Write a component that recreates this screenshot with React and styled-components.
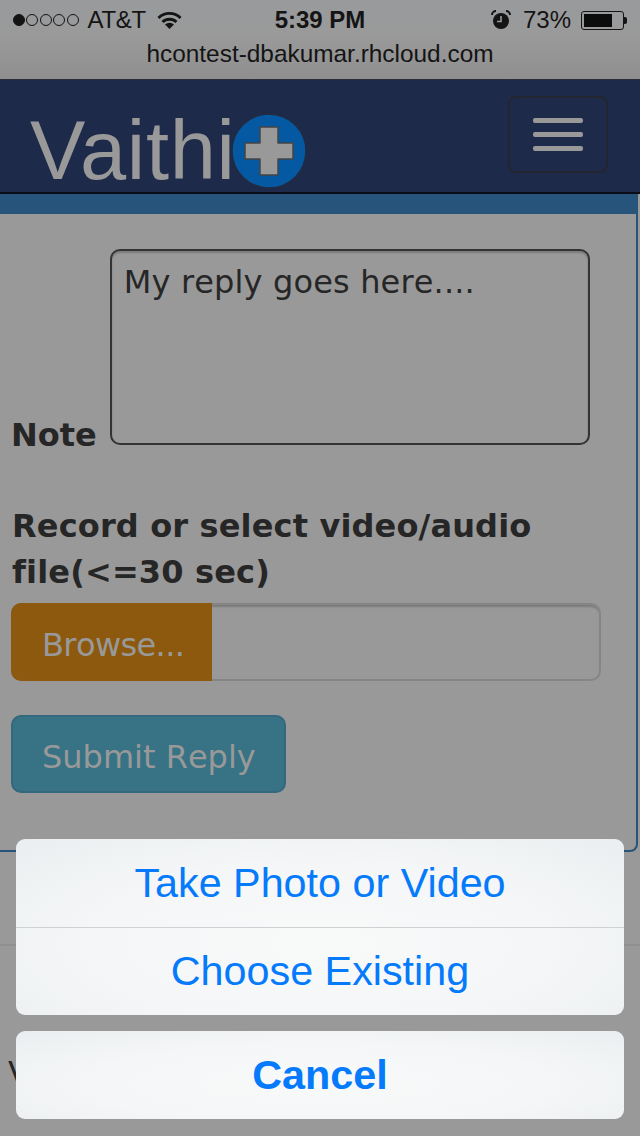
import React from 'react';
import styled, { createGlobalStyle } from 'styled-components';

const GlobalStyle = createGlobalStyle`
    html, body { margin: 0; padding: 0; background: #999; }
    * { box-sizing: border-box; }
`;

const Screen = styled.div`
    position: relative;
    width: 640px;
    height: 1136px;
    overflow: hidden;
    background: #999999;
    font-family: 'DejaVu Sans', sans-serif;
    font-kerning: none;
    font-variant-ligatures: none;
    color: #262626;
`;

const Chrome = styled.header`
    height: 80px;
    background: linear-gradient(180deg, #989a9c 0%, #9a9a9a 45%, #8f8f8f 100%);
    border-bottom: 1px solid #2a2f3a;
    font-family: 'Liberation Sans', sans-serif;
    font-kerning: normal;
    color: #141414;
`;

const StatusBar = styled.div`
    height: 40px;
    padding: 0 16px;
    display: grid;
    grid-template-columns: 1fr auto 1fr;
    align-items: center;
`;

const StatusLeft = styled.div`
    display: flex;
    align-items: center;
    margin-left: -3px;
    font-size: 24px;
    letter-spacing: -0.3px;
`;

const Dots = styled.div`
    display: flex;
    gap: 1.4px;
    margin-right: 9px;
`;

const Dot = styled.span`
    width: 12px;
    height: 12px;
    border-radius: 50%;
    border: 1px solid #141414;
    background: ${(props) => (props.filled ? '#141414' : 'transparent')};
`;

const Clock = styled.div`
    font-size: 24px;
    font-weight: 700;
`;

const StatusRight = styled.div`
    display: flex;
    align-items: center;
    justify-content: flex-end;
    font-size: 24px;
`;

const Battery = styled.div`
    width: 43px;
    height: 19px;
    margin-left: 10px;
    padding: 2px;
    border: 1px solid #141414;
    border-radius: 3px;
    position: relative;
    &::after {
        content: '';
        position: absolute;
        right: -4px;
        top: 5px;
        width: 3px;
        height: 7px;
        border-radius: 0 2px 2px 0;
        background: #141414;
    }
`;

const BatteryFill = styled.div`
    height: 100%;
    width: ${(props) => props.level}%;
    background: #0c0c0c;
`;

const Address = styled.div`
    height: 39px;
    text-align: center;
    font-size: 24.4px;
    line-height: 27px;
`;

const Navbar = styled.nav`
    height: 114px;
    background: #1e2a4a;
    border-bottom: 2px solid #0a0d16;
    display: flex;
    align-items: flex-start;
    justify-content: space-between;
    padding: 16px 32px 0 30px;
`;

const Brand = styled.div`
    display: flex;
    align-items: center;
    margin-top: 17px;
`;

const BrandText = styled.span`
    font-family: 'Liberation Sans', sans-serif;
    font-kerning: normal;
    font-size: 83px;
    line-height: 70px;
    letter-spacing: 0.7px;
    color: #999999;
    filter: blur(0.7px);
`;

const MenuButton = styled.div`
    width: 100px;
    height: 77px;
    border: 2px solid #23262e;
    border-radius: 8px;
    display: flex;
    flex-direction: column;
    align-items: center;
    justify-content: center;
    gap: 9px;
`;

const MenuBar = styled.span`
    width: 50px;
    height: 5px;
    border-radius: 2px;
    background: #999999;
`;

const Panel = styled.section`
    height: 658px;
    margin-right: 2px;
    border-right: 2px solid #27547a;
    border-bottom: 2px solid #27547a;
    border-bottom-right-radius: 8px;
`;

const PanelHeading = styled.div`
    height: 20px;
    background: #27547a;
`;

const Form = styled.div`
    padding: 35px 0 0 11px;
`;

const NoteRow = styled.div`
    display: flex;
    align-items: flex-end;
    gap: 13px;
`;

const Label = styled.div`
    font-size: 32px;
    font-weight: 700;
    line-height: 46px;
    color: #262626;
`;

const NoteLabel = styled(Label)`
    margin-bottom: -13px;
`;

const NoteBox = styled.div`
    width: 480px;
    height: 196px;
    padding: 11px 12px;
    border: 2px solid #333333;
    border-radius: 10px;
    box-shadow: inset 0 2px 2px rgba(0, 0, 0, 0.2);
    font-size: 32px;
    line-height: 40px;
    letter-spacing: 0.15px;
    color: #262626;
`;

const RecordLabel = styled(Label)`
    margin: 58px 0 8px 1px;
    letter-spacing: 0.15px;
`;

const FileField = styled.div`
    width: 590px;
    height: 78px;
    display: flex;
    border: 2px solid #858585;
    border-left: 0;
    border-radius: 10px;
    box-shadow: inset 0 3px 2px -1px rgba(0, 0, 0, 0.2);
`;

const BrowseButton = styled.div`
    width: 201px;
    margin: -2px 0;
    padding: 5px 0 0 31px;
    background: #8c590f;
    border-radius: 10px 0 0 10px;
    display: flex;
    align-items: center;
    font-size: 32px;
    letter-spacing: -0.6px;
    color: #999999;
`;

const SubmitButton = styled.div`
    width: 275px;
    height: 78px;
    margin-top: 34px;
    padding: 5px 0 0 29px;
    display: flex;
    align-items: center;
    background: #387285;
    border: 2px solid #34687f;
    border-radius: 10px;
    font-size: 32px;
    color: #999999;
`;

const Rule = styled.div`
    margin-top: 92px;
    height: 2px;
    background: #8f8f8f;
`;

const FooterText = styled.div`
    margin: 108px 0 0 8px;
    font-size: 32px;
    color: #262626;
`;

const Sheet = styled.div`
    position: absolute;
    left: 16px;
    right: 16px;
    bottom: 17px;
    display: flex;
    flex-direction: column;
    gap: 16px;
    font-family: 'Liberation Sans', sans-serif;
    font-kerning: normal;
`;

const SheetGroup = styled.div`
    border-radius: 9px;
    overflow: hidden;
    background: radial-gradient(ellipse at 50% 60%, #f8fafa 0%, #f4f6f7 55%, #ebeef0 100%);
`;

const SheetAction = styled.div`
    height: 88px;
    display: flex;
    align-items: center;
    justify-content: center;
    font-size: 41.3px;
    font-weight: ${(props) => (props.bold ? 700 : 400)};
    color: #057afb;
    border-top: ${(props) => (props.divided ? '1px solid #cfd1d2' : '0')};
`;

const WifiIcon = () => (
    <svg width="25" height="18" viewBox="0 0 30 22" style={{ marginLeft: 11 }}>
        <path d="M1.5 8.5 A19 19 0 0 1 28.5 8.5" fill="none" stroke="#141414" strokeWidth="3.6" />
        <path d="M6.5 13.5 A12 12 0 0 1 23.5 13.5" fill="none" stroke="#141414" strokeWidth="3.6" />
        <path d="M15 22 L9.5 16.5 A8 8 0 0 1 20.5 16.5 Z" fill="#141414" />
    </svg>
);

const AlarmIcon = () => (
    <svg width="20" height="20" viewBox="0 0 20 20" style={{ marginRight: 12 }}>
        <circle cx="10" cy="11" r="8" fill="#141414" />
        <path d="M10 6 V11.5 H6" fill="none" stroke="#9a9a9a" strokeWidth="1.6" />
        <path d="M1 5 A4 4 0 0 1 5 1 M19 5 A4 4 0 0 0 15 1" fill="none" stroke="#141414" strokeWidth="2" />
    </svg>
);

const PlusBadge = () => (
    <svg width="76" height="76" viewBox="0 0 76 76" preserveAspectRatio="none" style={{ flexShrink: 0, marginLeft: -5, marginTop: 0 }}>
        <circle cx="38" cy="38" r="37" fill="#0459a2" stroke="#222b40" strokeWidth="1.5" />
        <path
            d="M29 14 H47 V30 H62 V46 H47 V62 H29 V46 H14 V30 H29 Z"
            fill="#999999"
            stroke="#444"
            strokeWidth="1.5"
            strokeLinejoin="round"
        />
    </svg>
);

const App = () => {
    const dots = [true, false, false, false, false];

    return (
        <Screen>
            <GlobalStyle />
            <Chrome>
                <StatusBar>
                    <StatusLeft>
                        <Dots>
                            {dots.map((filled, i) => <Dot key={i} filled={filled} />)}
                        </Dots>
                        AT&amp;T
                        <WifiIcon />
                    </StatusLeft>
                    <Clock>5:39 PM</Clock>
                    <StatusRight>
                        <AlarmIcon />
                        73%
                        <Battery><BatteryFill level={75} /></Battery>
                    </StatusRight>
                </StatusBar>
                <Address>hcontest-dbakumar.rhcloud.com</Address>
            </Chrome>
            <Navbar>
                <Brand>
                    <BrandText>Vaithi</BrandText>
                    <PlusBadge />
                </Brand>
                <MenuButton>
                    <MenuBar />
                    <MenuBar />
                    <MenuBar />
                </MenuButton>
            </Navbar>
            <Panel>
                <PanelHeading />
                <Form>
                    <NoteRow>
                        <NoteLabel>Note</NoteLabel>
                        <NoteBox>My reply goes here....</NoteBox>
                    </NoteRow>
                    <RecordLabel>Record or select video/audio<br />file(&lt;=30 sec)</RecordLabel>
                    <FileField>
                        <BrowseButton>Browse...</BrowseButton>
                    </FileField>
                    <SubmitButton>Submit Reply</SubmitButton>
                </Form>
            </Panel>
            <Rule />
            <FooterText>V</FooterText>
            <Sheet>
                <SheetGroup>
                    <SheetAction>Take Photo or Video</SheetAction>
                    <SheetAction divided>Choose Existing</SheetAction>
                </SheetGroup>
                <SheetGroup>
                    <SheetAction bold>Cancel</SheetAction>
                </SheetGroup>
            </Sheet>
        </Screen>
    );
};

export default App;
